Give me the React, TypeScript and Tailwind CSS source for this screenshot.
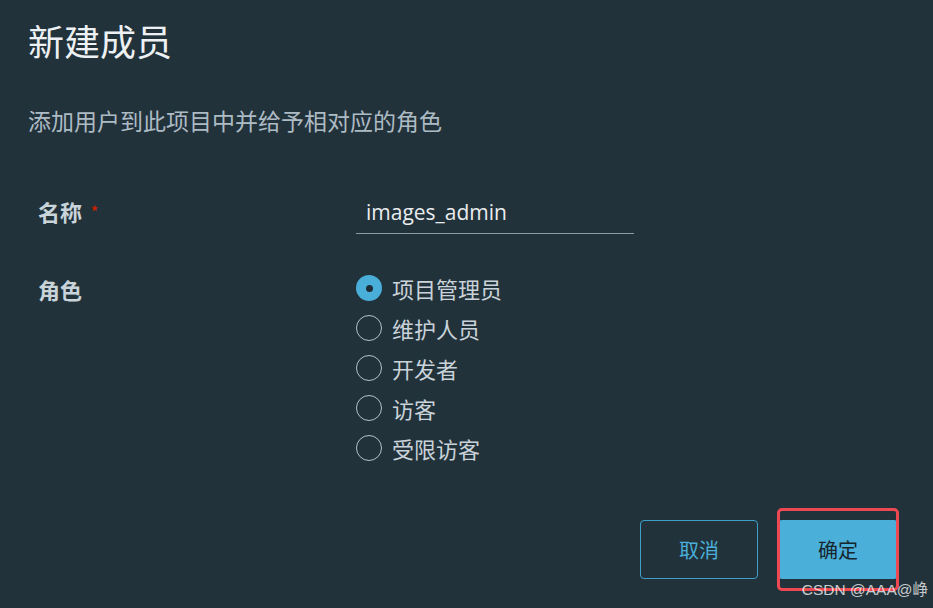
import { useState } from 'react';

const roles = ['项目管理员', '维护人员', '开发者', '访客', '受限访客'];

const App = () => {
  const [role, setRole] = useState(roles[0]);

  return (
    <div
      className="relative w-[933px] h-[608px] overflow-hidden bg-[#22323b]"
      style={{ fontFamily: '"Noto Sans CJK SC", "Noto Sans", sans-serif' }}
    >
      <div className="pl-[28px] pt-[22px]">
        {/* Header */}
        <h1 className="text-[36px] leading-[36px] text-[#eef1f3]">新建成员</h1>
        <p className="mt-[51px] text-[23px] leading-[23px] text-[#adbbc4]">添加用户到此项目中并给予相对应的角色</p>

        {/* Form */}
        <div className="mt-[66px] grid grid-cols-[328px_278px]">
          <div className="pl-[10px] pt-[2px] flex items-start">
            <span className="text-[22px] leading-[22px] font-bold text-[#c8d3da]">名称</span>
            <span className="ml-[9px] mt-[4px] text-[14px] leading-[14px] font-bold text-[#c92100]">*</span>
          </div>
          <div className="border-b-[1.5px] border-[#8d9ba4] pb-[7px] pl-[10px]">
            <div
              className="h-[28px] text-[21px] leading-[28px] text-[#e9ecef]"
              style={{ fontFamily: '"Open Sans", sans-serif' }}
            >
              images_admin
            </div>
          </div>

          <div className="mt-[34px] pl-[10px] pt-[10px]">
            <span className="text-[22px] leading-[22px] font-bold text-[#c8d3da]">角色</span>
          </div>
          <div className="mt-[34px] flex flex-col">
            {roles.map((r) => {
              const checked = r === role;
              return (
                <label key={r} className="h-[40px] flex items-center cursor-pointer" onClick={() => setRole(r)}>
                  <span
                    className={`w-[26px] h-[26px] rounded-full flex items-center justify-center ${
                      checked ? 'bg-[#49afd9]' : 'border-[1.5px] border-[#b5c2ca]'
                    }`}
                  >
                    {checked && <span className="w-[7px] h-[7px] rounded-full bg-[#1e2d35]" />}
                  </span>
                  <span className="ml-[10px] text-[22px] leading-[22px] text-[#c9d3d9]">{r}</span>
                </label>
              );
            })}
          </div>
        </div>
      </div>

      {/* Footer buttons */}
      <div className="mt-[52px] pr-[36px] flex justify-end gap-[21px]">
        <button className="w-[118px] h-[59px] rounded-[4px] border-[1.5px] border-[#3e9fcb] text-[20px] text-[#49afd9]">
          取消
        </button>
        <div className="relative">
          <button className="w-[118px] h-[59px] rounded-[3px] bg-[#4aafd9] text-[20px] text-[#17252d]">确定</button>
          <div className="absolute -left-[2px] -right-[2px] -top-[12px] -bottom-[12px] border-[3px] border-[#ee4852] rounded-[5px] pointer-events-none" />
        </div>
      </div>

      {/* Watermark */}
      <div
        className="absolute right-[5px] top-[580px] text-[15.5px] leading-[20px] text-white/75"
        style={{ fontFamily: '"Liberation Sans", "Noto Sans CJK SC", sans-serif' }}
      >
        CSDN @AAA@峥
      </div>
    </div>
  );
};

export default App;
